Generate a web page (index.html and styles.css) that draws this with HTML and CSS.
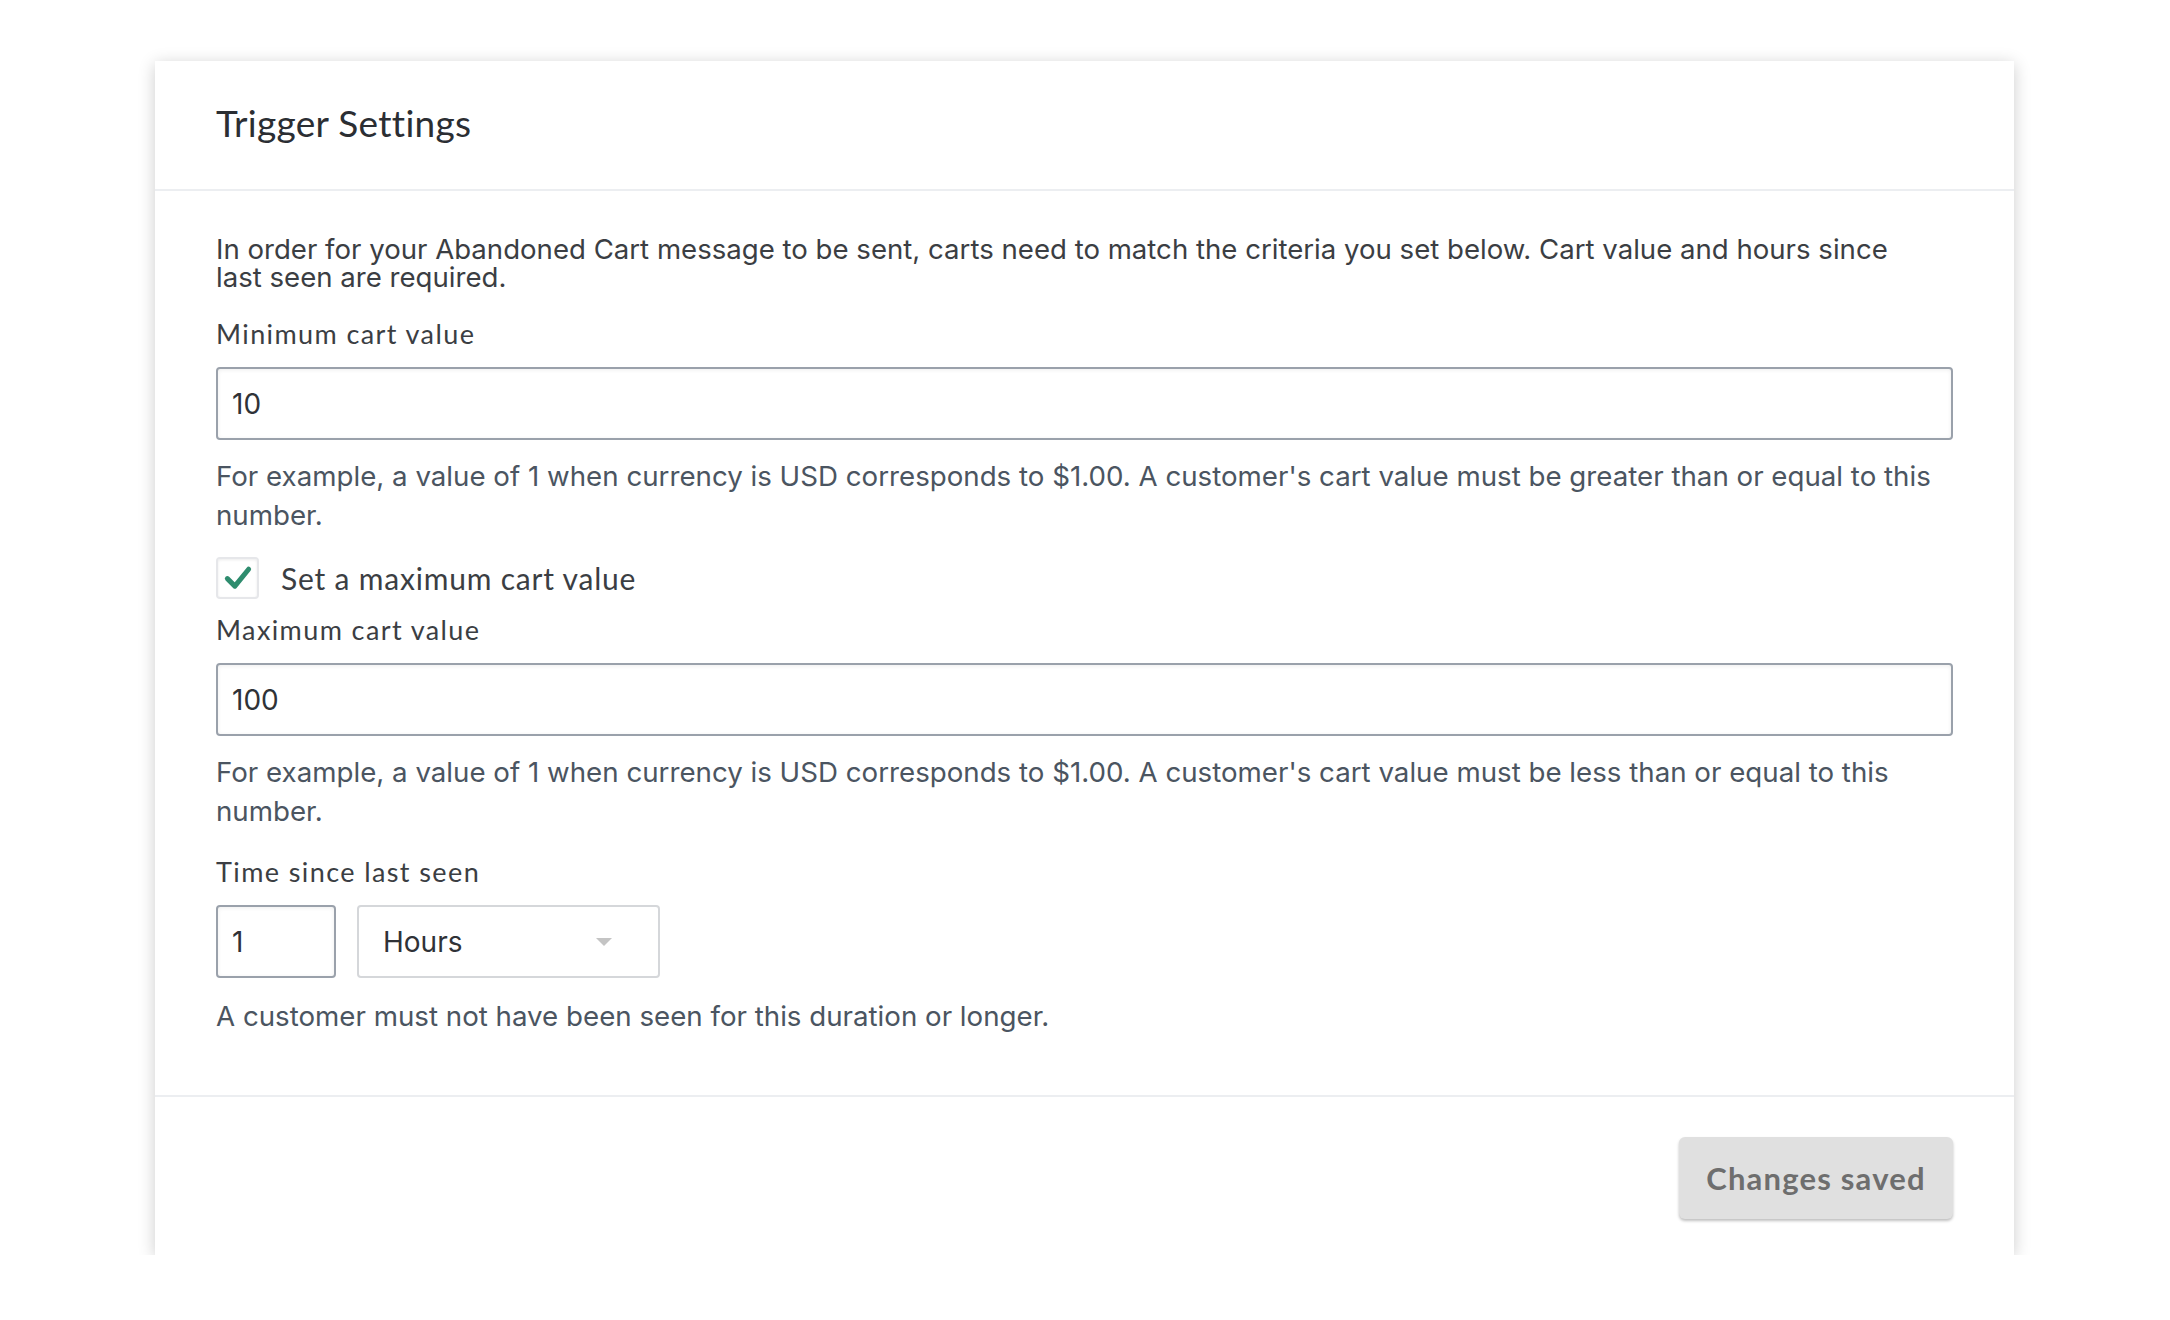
FILE: index.html
```html
<!DOCTYPE html>
<html lang="en">
<head>
<meta charset="utf-8">
<title>Trigger Settings</title>
<link rel="stylesheet" href="styles.css">
</head>
<body>
<div class="page">
  <section class="card">
    <header class="card-header">
      <h2 class="title">Trigger Settings</h2>
    </header>
    <div class="card-body">
      <p class="desc">In order for your Abandoned Cart message to be sent, carts need to match the criteria you set below. Cart value and hours since last seen are required.</p>

      <label class="label">Minimum cart value</label>
      <div class="input">10</div>
      <p class="help">For example, a value of 1 when currency is USD corresponds to $1.00. A customer's cart value must be greater than or equal to this number.</p>

      <div class="check-row">
        <span class="checkbox">
          <svg viewBox="0 0 24 24" width="30" height="30"><path d="M3.5 12.5 L9.5 18.5 L20.5 5" fill="none" stroke="#2e8c6e" stroke-width="4" stroke-linecap="round" stroke-linejoin="round"/></svg>
        </span>
        <span class="check-label">Set a maximum cart value</span>
      </div>

      <label class="label label-max">Maximum cart value</label>
      <div class="input">100</div>
      <p class="help">For example, a value of 1 when currency is USD corresponds to $1.00. A customer's cart value must be less than or equal to this number.</p>

      <label class="label label-time">Time since last seen</label>
      <div class="time-row">
        <div class="input input-small">1</div>
        <div class="select">
          <span>Hours</span>
          <span class="caret"></span>
        </div>
      </div>
      <p class="help help-last">A customer must not have been seen for this duration or longer.</p>
    </div>
    <footer class="card-footer">
      <button class="btn">Changes saved</button>
    </footer>
  </section>
</div>
</body>
</html>
```

FILE: styles.css
```css
html, body {
  margin: 0;
  padding: 0;
  background: #ffffff;
}

.page {
  padding: 61px 0 0 155px;
}

.card {
  width: 1859px;
  background: #fff;
  box-shadow: 0 3px 16px rgba(0, 0, 0, 0.2);
  display: flex;
  flex-direction: column;
}

.card-header {
  height: 130px;
  display: flex;
  align-items: center;
  padding: 0 61px 5px 61px;
  box-sizing: border-box;
  border-bottom: 2px solid #eceef1;
}

.title {
  margin: 0;
  font-family: "Lato", "Noto Sans", sans-serif;
  font-weight: 400;
  font-size: 37px;
  color: #2b2e33;
  letter-spacing: 0.3px;
}

.card-body {
  padding: 44px 61px 59px 61px;
  display: flex;
  flex-direction: column;
}

.desc {
  margin: 0;
  max-width: 1700px;
  font-family: "Inter", "Liberation Sans", sans-serif;
  font-size: 27.6px;
  line-height: 28px;
  color: #3b3e43;
}

.label {
  display: block;
  margin-top: 28px;
  font-family: "Lato", "Noto Sans", sans-serif;
  font-size: 27px;
  line-height: 30px;
  color: #3b3e43;
  letter-spacing: 1.4px;
}

.label-max {
  margin-top: 16px;
}

.label-time {
  margin-top: 26px;
}

.input {
  margin-top: 18px;
  box-sizing: border-box;
  height: 73px;
  border: 2px solid #9aa1ab;
  border-radius: 4px;
  box-shadow: inset 0 1px 4px rgba(0, 0, 0, 0.07);
  padding: 0 14px;
  display: flex;
  align-items: center;
  font-family: "Inter", "Liberation Sans", sans-serif;
  font-size: 28px;
  color: #2f3237;
}

.help {
  margin: 17px 0 0 0;
  font-family: "Inter", "Liberation Sans", sans-serif;
  font-size: 27.7px;
  line-height: 39px;
  color: #4b5561;
}

.help-last {
  margin-top: 19px;
}

.check-row {
  margin-top: 22px;
  display: flex;
  align-items: center;
  gap: 22px;
}

.checkbox {
  box-sizing: border-box;
  width: 43px;
  height: 42px;
  border: 2px solid #e6e7ea;
  border-radius: 4px;
  box-shadow: inset 0 1px 3px rgba(0, 0, 0, 0.08);
  display: flex;
  align-items: center;
  justify-content: center;
}

.check-label {
  font-family: "Lato", "Noto Sans", sans-serif;
  font-size: 30px;
  color: #3b3e43;
  letter-spacing: 0.8px;
}

.time-row {
  margin-top: 18px;
  display: flex;
  gap: 21px;
}

.time-row .input {
  margin-top: 0;
}

.input-small {
  width: 120px;
}

.select {
  box-sizing: border-box;
  width: 303px;
  height: 73px;
  border: 2px solid #d5d7da;
  border-radius: 4px;
  display: flex;
  align-items: center;
  justify-content: space-between;
  padding: 0 46px 0 24px;
  font-family: "Inter", "Liberation Sans", sans-serif;
  font-size: 28px;
  color: #2f3237;
}

.caret {
  width: 0;
  height: 0;
  border-left: 8px solid transparent;
  border-right: 8px solid transparent;
  border-top: 8px solid #c4c4c4;
}

.card-footer {
  border-top: 2px solid #eceef1;
  padding: 40px 61px 36px 61px;
  display: flex;
  justify-content: flex-end;
}

.btn {
  width: 274px;
  height: 82px;
  border: none;
  border-radius: 6px;
  background: #e0e0e0;
  box-shadow: 0 2px 3px rgba(0, 0, 0, 0.25);
  font-family: "Lato", "Noto Sans", sans-serif;
  font-weight: 700;
  font-size: 31px;
  color: #6e6e6e;
  letter-spacing: 1.2px;
}
```
